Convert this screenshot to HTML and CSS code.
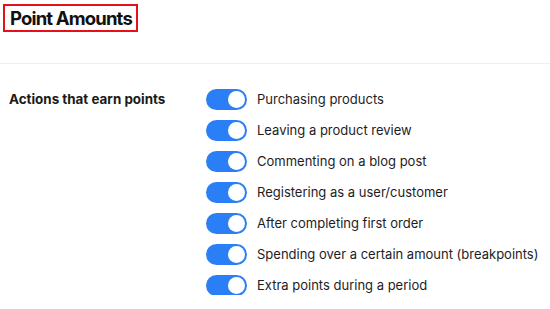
FILE: index.html
```html
<!DOCTYPE html>
<html>
<head>
<meta charset="utf-8">
<link rel="stylesheet" href="styles.css">
</head>
<body>
<header class="head">
  <h2 class="title">Point Amounts</h2>
</header>
<section class="settings">
  <div class="label">Actions that earn points</div>
  <ul class="toggles">
    <li class="row"><span class="switch"></span><span class="text">Purchasing products</span></li>
    <li class="row"><span class="switch"></span><span class="text">Leaving a product review</span></li>
    <li class="row"><span class="switch"></span><span class="text">Commenting on a blog post</span></li>
    <li class="row"><span class="switch"></span><span class="text">Registering as a user/customer</span></li>
    <li class="row"><span class="switch"></span><span class="text">After completing first order</span></li>
    <li class="row"><span class="switch"></span><span class="text">Spending over a certain amount (breakpoints)</span></li>
    <li class="row"><span class="switch"></span><span class="text">Extra points during a period</span></li>
  </ul>
</section>
</body>
</html>
```
FILE: styles.css
```css
* { box-sizing: border-box; }
body {
  margin: 0;
  background: #fff;
  font-family: Inter, "Liberation Sans", sans-serif;
  color: #1d1d1f;
}
.head {
  padding: 4px 0 0 3px;
  height: 64px;
  border-bottom: 1px solid #eeeeee;
}
.title {
  display: inline-block;
  margin: 0;
  border: 2px solid #e5101a;
  padding: 1px 4px 1px 5px;
  font-size: 18.5px;
  font-weight: 700;
  line-height: 22px;
  letter-spacing: -0.85px;
  color: #111;
}
.settings {
  display: flex;
  padding: 25px 0 0 9px;
}
.label {
  width: 197px;
  font-size: 13.4px;
  font-weight: 700;
  line-height: 20px;
  color: #1a1a1a;
}
.toggles {
  list-style: none;
  margin: 0;
  padding: 0;
  display: flex;
  flex-direction: column;
  gap: 11px;
}
.row {
  display: flex;
  align-items: center;
  gap: 10px;
  height: 20px;
}
.switch {
  position: relative;
  width: 41px;
  height: 21px;
  border-radius: 11px;
  background: #2b7ff6;
  flex: none;
}
.switch::after {
  content: "";
  position: absolute;
  right: 2px;
  top: 2px;
  width: 17px;
  height: 17px;
  border-radius: 50%;
  background: #fff;
}
.text {
  font-size: 13px;
  line-height: 20px;
  color: #1d1d1f;
}
```
